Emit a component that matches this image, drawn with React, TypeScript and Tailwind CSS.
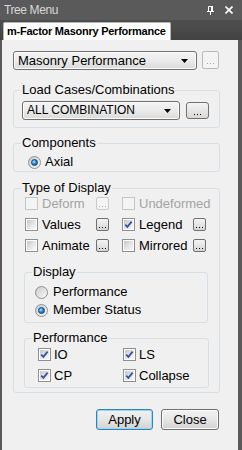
import React from 'react'

function Check({ checked, disabled }: { checked?: boolean; disabled?: boolean }) {
  return (
    <span
      className={`relative flex h-[13px] w-[13px] shrink-0 items-center justify-center border ${
        disabled ? 'border-[#c5c5c5] bg-[#f4f4f4]' : 'border-[#8e8f8f] bg-white p-[1px]'
      }`}
    >
      {!disabled && <span className="h-full w-full bg-gradient-to-br from-[#c4c6c9] via-[#e4e4e4] to-[#fafafa]" />}
      {checked && (
        <svg className="absolute left-0 top-0" width="11" height="11" viewBox="0 0 11 11">
          <path d="M2.2 5.6 L4.4 7.9 L8.6 2.6" fill="none" stroke="#3553a8" strokeWidth="1.8" />
        </svg>
      )}
    </span>
  )
}

function Radio({ checked }: { checked?: boolean }) {
  return (
    <span className="flex h-[13px] w-[13px] shrink-0 items-center justify-center rounded-full border border-[#8e8f8f] bg-gradient-to-br from-[#c9cacc] to-[#fbfbfb]">
      {checked && (
        <span className="h-[7px] w-[7px] rounded-full border border-[#0e3f75] bg-[radial-gradient(circle_at_35%_35%,#a6e8ff_0%,#2a8fde_45%,#0b4c8f_100%)]" />
      )}
    </span>
  )
}

function Dots({ color, y }: { color: string; y: number }) {
  return (
    <svg width="9" height="12" viewBox="0 0 9 12" className="block">
      <rect x="1" y={y} width="1" height="1" fill={color} />
      <rect x="4" y={y} width="1" height="1" fill={color} />
      <rect x="7" y={y} width="1" height="1" fill={color} />
    </svg>
  )
}

function SmallBtn({ disabled }: { disabled?: boolean }) {
  return (
    <span
      className={`flex h-[13px] w-[13px] shrink-0 items-center justify-center rounded-[2px] border ${
        disabled ? 'border-[#c8cacc] bg-[#f4f4f4]' : 'border-[#707070] bg-gradient-to-b from-[#f4f4f4] to-[#d6d6d6]'
      }`}
    >
      <Dots color={disabled ? '#b0b0b0' : '#000'} y={8} />
    </span>
  )
}

function Combo({ label, width, small }: { label: string; width: string; small?: boolean }) {
  return (
    <div
      className={`flex h-[19px] ${width} items-center justify-between rounded-[3px] border border-[#707070] bg-gradient-to-b from-[#f4f4f4] via-[#ebebeb] to-[#dadada] pl-[4px] pr-[8px] shadow-[inset_0_0_0_1px_#fbfbfb]`}
    >
      <span className={`${small ? 'text-[12px]' : 'text-[13px]'} leading-[15px]`}>{label}</span>
      <svg width="7" height="4" viewBox="0 0 7 4">
        <path d="M0 0 H7 L3.5 4 Z" fill="#000" />
      </svg>
    </div>
  )
}

function Group({
  title,
  className,
  children,
}: {
  title: string
  className: string
  children: React.ReactNode
}) {
  return (
    <fieldset className={`rounded-[3px] border border-[#d5dfe5] ${className}`}>
      <legend className="ml-[7px] px-[1px] text-[13px] leading-[16px]">{title}</legend>
      {children}
    </fieldset>
  )
}

function Cell({ label, checked, disabled }: { label: string; checked?: boolean; disabled?: boolean }) {
  return (
    <div className="flex w-[71px] items-center gap-[4px] whitespace-nowrap">
      <Check checked={checked} disabled={disabled} />
      <span className={`text-[13px] leading-[13px] ${disabled ? 'text-[#a3a3a3]' : ''}`}>{label}</span>
    </div>
  )
}

export default function App() {
  return (
    <div className="flex h-[450px] w-[242px] flex-col bg-[#5a5a5a] font-['Liberation_Sans',Arial,sans-serif] text-black">
      {/* title bar */}
      <div className="flex h-[20px] items-center justify-between pl-[4px] pr-[9px] text-[12px] tracking-[-0.4px] text-[#d8d8d8]">
        <span>Tree Menu</span>
        <div className="flex items-center gap-[11px]">
          <svg width="7" height="9" viewBox="0 0 7 9">
            <path d="M1.5 0.5 H5.5 V5 M1.5 0.5 V5" fill="none" stroke="#fff" strokeWidth="1" />
            <rect x="4" y="0" width="2" height="5" fill="#fff" />
            <rect x="0" y="5" width="7" height="1" fill="#fff" />
            <rect x="3" y="6" width="1" height="3" fill="#fff" />
          </svg>
          <svg width="8" height="8" viewBox="0 0 8 8">
            <path d="M0.5 0.5 L7.5 7.5 M7.5 0.5 L0.5 7.5" stroke="#fff" strokeWidth="1.6" />
          </svg>
        </div>
      </div>

      {/* tab strip */}
      <div className="flex h-[20px] items-end bg-gradient-to-b from-[#4e4e4e] to-[#434343] pl-[3px]">
        <div className="flex h-[18px] w-[168px] items-center rounded-t-[2px] border border-b-0 border-[#b5b5b5] bg-white pl-[3px] text-[11px] font-bold tracking-[-0.25px]">
          m-Factor Masonry Performance
        </div>
      </div>

      {/* body */}
      <div className="ml-[2px] mr-[4px] flex flex-1 flex-col bg-[#f0f0f0] pl-[11px] pt-[11px]">
        <div className="flex h-[19px] items-start gap-[5px]">
          <Combo label="Masonry Performance" width="w-[184px]" />
          <span className="flex h-[18px] w-[17px] items-center justify-center rounded-[2px] border border-[#b8bcbf] bg-[#f4f4f4]">
            <Dots color="#a6a6a6" y={9} />
          </span>
        </div>

        <Group title="Load Cases/Combinations" className="mt-[12px] w-[207px]">
          <div className="flex items-start gap-[6px] pb-[7px] pl-[8px] pt-[3px]">
            <Combo label="ALL COMBINATION" width="w-[158px]" small />
            <span className="mt-[1px] flex h-[17px] w-[23px] items-center justify-center rounded-[3px] border border-[#707070] bg-gradient-to-b from-[#f4f4f4] to-[#d8d8d8]">
              <Dots color="#000" y={9} />
            </span>
          </div>
        </Group>

        <Group title="Components" className="mt-[7px] w-[207px]">
          <div className="flex h-[14px] items-center gap-[4px] pl-[14px]" style={{ marginTop: 4, marginBottom: 2 }}>
            <Radio checked />
            <span className="text-[13px] leading-[14px]">Axial</span>
          </div>
        </Group>

        <Group title="Type of Display" className="mt-[8px] w-[207px] pb-[4px]">
          <div className="flex flex-col gap-[8px] pl-[11px] pt-[1px]">
            <div className="flex h-[13px] items-center">
              <Cell label="Deform" disabled />
              <SmallBtn disabled />
              <div className="ml-[13px]">
                <Cell label="Undeformed" disabled />
              </div>
            </div>
            <div className="flex h-[13px] items-center">
              <Cell label="Values" />
              <SmallBtn />
              <div className="ml-[13px]">
                <Cell label="Legend" checked />
              </div>
              <SmallBtn />
            </div>
            <div className="flex h-[13px] items-center">
              <Cell label="Animate" />
              <SmallBtn />
              <div className="ml-[13px]">
                <Cell label="Mirrored" />
              </div>
              <SmallBtn />
            </div>
          </div>

          <Group title="Display" className="ml-[10px] mt-[12px] w-[184px]">
            <div className="flex flex-col gap-[4px] pb-[5px] pl-[10px] pt-[5px]">
              <div className="flex h-[14px] items-center gap-[5px]">
                <Radio />
                <span className="text-[13px] leading-[14px]">Performance</span>
              </div>
              <div className="flex h-[14px] items-center gap-[5px]">
                <Radio checked />
                <span className="text-[13px] leading-[14px]">Member Status</span>
              </div>
            </div>
          </Group>

          <Group title="Performance" className="ml-[10px] mt-[7px] w-[184px]">
            <div className="grid grid-cols-[85px_85px] gap-y-[8px] pb-[5px] pl-[13px] pt-[2px]">
              {['IO', 'LS', 'CP', 'Collapse'].map((t) => (
                <div key={t} className="flex h-[13px] items-center gap-[3px]">
                  <Check checked />
                  <span className="text-[13px] leading-[13px]">{t}</span>
                </div>
              ))}
            </div>
          </Group>
        </Group>

        <div className="mt-[16px] flex w-[207px] justify-end gap-[8px] pr-[1px]">
          <button className="flex h-[21px] w-[57px] items-center justify-center rounded-[3px] border border-[#3c7fb1] bg-gradient-to-b from-[#f2f2f2] via-[#e6e6e6] to-[#d2d2d2] text-[13px] shadow-[inset_0_0_0_1px_#8fd8f7]">
            Apply
          </button>
          <button className="flex h-[21px] w-[58px] items-center justify-center rounded-[3px] border border-[#707070] bg-gradient-to-b from-[#f2f2f2] via-[#e6e6e6] to-[#d2d2d2] text-[13px] shadow-[inset_0_0_0_1px_#fbfbfb]">
            Close
          </button>
        </div>
      </div>
    </div>
  )
}
